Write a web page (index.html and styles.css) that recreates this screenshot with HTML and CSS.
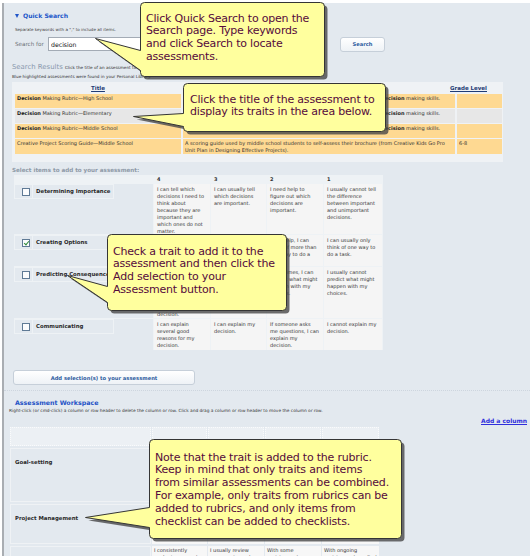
FILE: index.html
```html
<!DOCTYPE html>
<html lang="en">
<head>
<meta charset="utf-8">
<title>Quick Search</title>
<link rel="stylesheet" href="styles.css">
</head>
<body>
<div class="page">
  <section class="quick">
    <h2 class="panel-title"><span class="caret"></span>Quick Search</h2>
    <p class="hint">Separate keywords with a "," to include all items.</p>
    <form class="search-row">
      <label class="search-label" for="q">Search for</label>
      <input id="q" class="search-input" type="text" value="decision">
      <button type="button" class="btn search-btn">Search</button>
    </form>
  </section>

  <section class="results">
    <h3 class="results-title">Search Results <span class="note">Click the title of an assessment to view its traits below.</span></h3>
    <p class="note note-line">Blue highlighted assessments were found in your Personal Library.</p>
    <div class="results-panel">
      <div class="rgrid">
        <div class="rh rh-title"><a href="#">Title</a></div>
        <div class="rh rh-grade"><a href="#">Grade Level</a></div>

        <div class="rc orange"><b>Decision</b> Making Rubric—High School</div>
        <div class="rc orange">Students use this rubric in the classroom to evaluate and reflect on their own <b>Decision</b> making skills.</div>
        <div class="rc orange"></div>

        <div class="rc grey"><b>Decision</b> Making Rubric—Elementary</div>
        <div class="rc grey">Students use this rubric in the classroom to evaluate and reflect on their own <b>Decision</b> making skills.</div>
        <div class="rc grey"></div>

        <div class="rc orange"><b>Decision</b> Making Rubric—Middle School</div>
        <div class="rc orange">Students use this rubric in the classroom to evaluate and reflect on their own <b>Decision</b> making skills.</div>
        <div class="rc orange"></div>

        <div class="rc orange">Creative Project Scoring Guide—Middle School</div>
        <div class="rc orange">A scoring guide used by middle school students to self-assess their brochure (from Creative Kids Go Pro Unit Plan in Designing Effective Projects).</div>
        <div class="rc orange">6-8</div>
      </div>
    </div>

    <h3 class="select-title">Select items to add to your assessment:</h3>
    <div class="traits">
      <div class="th"></div>
      <div class="th">4</div>
      <div class="th">3</div>
      <div class="th">2</div>
      <div class="th">1</div>

      <div class="trait"><span class="cb-cell"><input type="checkbox" class="cb"></span><span class="name-cell">Determining Importance</span></div>
      <div class="td">I can tell which decisions I need to think about because they are important and which ones do not matter.</div>
      <div class="td">I can usually tell which decisions are important.</div>
      <div class="td">I need help to figure out which decisions are important.</div>
      <div class="td">I usually cannot tell the difference between important and unimportant decisions.</div>

      <div class="trait"><span class="cb-cell"><input type="checkbox" class="cb" checked></span><span class="name-cell">Creating Options</span></div>
      <div class="td">I can think of many different ways to do a task.</div>
      <div class="td">I can think of more than one way to do a task.</div>
      <div class="td">With help, I can think of more than one way to do a task.</div>
      <div class="td">I can usually only think of one way to do a task.</div>

      <div class="trait"><span class="cb-cell"><input type="checkbox" class="cb"></span><span class="name-cell">Predicting Consequences</span></div>
      <div class="td">I can predict what might happen with each of my choices and I use what I know to make a good, careful decision.</div>
      <div class="td">I can usually predict what might happen with my choices.</div>
      <div class="td">Sometimes, I can predict what might happen with my choices.</div>
      <div class="td">I usually cannot predict what might happen with my choices.</div>

      <div class="trait"><span class="cb-cell"><input type="checkbox" class="cb"></span><span class="name-cell">Communicating</span></div>
      <div class="td">I can explain several good reasons for my decision.</div>
      <div class="td">I can explain my decision.</div>
      <div class="td">If someone asks me questions, I can explain my decision.</div>
      <div class="td">I cannot explain my decision.</div>
    </div>

    <button type="button" class="btn add-btn">Add selection(s) to your assessment</button>
  </section>

  <section class="workspace">
    <h2 class="ws-title">Assessment Workspace</h2>
    <p class="note ws-note">Right-click (or cmd-click) a column or row header to delete the column or row. Click and drag a column or row header to move the column or row.</p>
    <div class="ws-actions"><a href="#" class="add-col">Add a column</a></div>
    <div class="ws-grid">
      <div class="wh"></div><div class="wh"></div><div class="wh"></div><div class="wh"></div><div class="wh"></div>

      <div class="wrow-name">Goal-setting</div>
      <div class="wd">I set goals for myself and check my progress toward them.</div>
      <div class="wd">I usually set goals for myself.</div>
      <div class="wd">With help, I can set goals.</div>
      <div class="wd">I do not set goals.</div>

      <div class="wrow-name">Project Management</div>
      <div class="wd">I plan my project and manage my time well.</div>
      <div class="wd">I usually plan my project.</div>
      <div class="wd">With help, I can plan my project.</div>
      <div class="wd">I do not plan my project.</div>

      <div class="wrow-name wrow-last">Problem Solving</div>
      <div class="wd">I consistently evaluate my work to find problems.</div>
      <div class="wd">I usually review progress toward my goals.</div>
      <div class="wd">With some assistance, I can find problems.</div>
      <div class="wd">With ongoing assistance, I can find problems.</div>
    </div>
  </section>
</div>

<svg class="callouts" width="530" height="556" viewBox="0 0 530 556" aria-hidden="true">
  <defs>
    <filter id="soft" x="-10%" y="-10%" width="120%" height="120%"><feGaussianBlur stdDeviation="0.7"/></filter>
    <path id="c1" d="M144.5 2.5 H320.5 Q324.5 2.5 324.5 6.5 V72.5 Q324.5 76.5 320.5 76.5 H144.5 Q140.5 76.5 140.5 72.5 V70.5 L95.5 38.5 L140.5 50.5 V6.5 Q140.5 2.5 144.5 2.5 Z"/>
    <path id="c2" d="M187.5 83.5 H381.5 Q385.5 83.5 385.5 87.5 V127.5 Q385.5 131.5 381.5 131.5 H187.5 Q183.5 131.5 183.5 127.5 V126.5 L133.5 116.5 L183.5 113.5 V87.5 Q183.5 83.5 187.5 83.5 Z"/>
    <path id="c3" d="M111.5 234.5 H282.5 Q286.5 234.5 286.5 238.5 V306.5 Q286.5 310.5 282.5 310.5 H111.5 Q107.5 310.5 107.5 306.5 V302.5 L67.5 275.5 L107.5 286.5 V238.5 Q107.5 234.5 111.5 234.5 Z"/>
    <path id="c4" d="M153.5 439.5 H397.5 Q401.5 439.5 401.5 443.5 V534.5 Q401.5 538.5 397.5 538.5 H153.5 Q149.5 538.5 149.5 534.5 V527.5 L85.5 517.5 L149.5 507.5 V443.5 Q149.5 439.5 153.5 439.5 Z"/>
  </defs>
  <g class="callout-shadow" transform="translate(3 3)" filter="url(#soft)">
    <use href="#c1"/><use href="#c2"/><use href="#c3"/><use href="#c4"/>
  </g>
  <g class="callout-shape">
    <use href="#c1"/><use href="#c2"/><use href="#c3"/><use href="#c4"/>
  </g>
</svg>

<div class="callout-text ct1">Click Quick Search to open the<br>Search page. Type keywords<br>and click Search to locate<br>assessments.</div>
<div class="callout-text ct2">Click the title of the assessment to<br>display its traits in the area below.</div>
<div class="callout-text ct3">Check a trait to add it to the<br>assessment and then click the<br>Add selection to your<br>Assessment button.</div>
<div class="callout-text ct4">Note that the trait is added to the rubric.<br>Keep in mind that only traits and items<br>from similar assessments can be combined.<br>For example, only traits from rubrics can be<br>added to rubrics, and only items from<br>checklist can be added to checklists.</div>
</body>
</html>
```

FILE: styles.css
```css
* { box-sizing: border-box; }
html, body { margin: 0; padding: 0; }
body {
  position: relative;
  width: 530px;
  height: 556px;
  overflow: hidden;
  background: #ffffff;
  font-family: "DejaVu Sans", Verdana, sans-serif;
  color: #333;
}
.page {
  margin: 3px 0 0 2px;
  border-left: 2px solid #a9adb2;
  background: #e3e9ef;
  height: 553px;
}

/* Quick search */
.quick { padding: 9px 0 0 11px; }
.panel-title {
  margin: 0;
  display: flex;
  align-items: center;
  gap: 3px;
  font-size: 6.1px;
  line-height: 8px;
  font-weight: bold;
  color: #2156c9;
}
.caret {
  width: 0; height: 0;
  border-left: 2.5px solid transparent;
  border-right: 2.5px solid transparent;
  border-top: 4px solid #2156c9;
  margin-right: 1px;
}
.hint {
  margin: 7px 0 0;
  font-size: 4.1px;
  line-height: 6px;
  color: #444;
}
.search-row {
  margin: 4px 0 0;
  display: flex;
  align-items: center;
  height: 14px;
}
.search-label {
  width: 33px;
  font-size: 5.6px;
  color: #6a6f76;
}
.search-input {
  width: 200px;
  height: 14px;
  margin: 0;
  padding: 0 2px;
  border: 1px solid #a3abb5;
  background: #fff;
  font-family: "DejaVu Sans", sans-serif;
  font-size: 6.2px;
  color: #111;
}
.btn {
  margin: 0;
  padding: 0;
  border: 1px solid #c6cfd9;
  border-radius: 3px;
  background: linear-gradient(#ffffff, #eef2f6);
  font-family: "DejaVu Sans", sans-serif;
  font-weight: bold;
  color: #2d5c9f;
}
.search-btn {
  margin-left: 92px;
  width: 45px;
  height: 15px;
  font-size: 5.2px;
}

/* Results */
.results { padding-left: 8px; }
.results-title {
  margin: 11px 0 0;
  font-size: 6.9px;
  line-height: 10px;
  font-weight: normal;
  color: #8898ad;
}
.note {
  font-size: 4.2px;
  color: #333;
}
.note-line {
  margin: 1px 0 0;
  line-height: 6px;
}
.results-panel {
  margin-top: 2px;
  width: 491px;
  padding: 1px 1px 8px 3px;
  background: #eff2f5;
}
.rgrid {
  display: grid;
  grid-template-columns: 166px 272px 45px;
  grid-template-rows: 10px;
  grid-auto-rows: minmax(14px, auto);
  column-gap: 2px;
  row-gap: 1px;
  font-size: 5px;
  line-height: 7px;
}
.rh {
  font-size: 5.5px;
  line-height: 10px;
  font-weight: bold;
}
.rh a { color: #1f3c76; text-decoration: underline; }
.rh-title { text-align: center; }
.rh-grade { grid-column: 2 / 4; text-align: right; padding-right: 15px; }
.rc { padding: 1px 2px 0; }
.orange { background: #fed992; }
.grey { background: #e7e7e7; }
.rc b { color: #222; }

.select-title {
  margin: 4px 0 0;
  font-size: 5.6px;
  line-height: 8px;
  font-weight: bold;
  color: #8e99a7;
}
.traits {
  margin: 1px 0 0 2px;
  width: 369px;
  display: grid;
  grid-template-columns: 139px 56px 55px 56px 58px;
  grid-template-rows: 8px 50px 31px 51px 31px;
  gap: 1px;
  background: #eef2f5;
}
.th {
  font-size: 5px;
  line-height: 8px;
  font-weight: bold;
  padding-left: 3px;
  color: #333;
}
.trait {
  display: flex;
  align-items: flex-start;
  background: #e3e9ef;
}
.cb-cell {
  width: 19px;
  height: 15px;
  padding: 3px 0 0 7px;
  border: 1px solid #eef2f5;
}
.cb {
  appearance: none;
  -webkit-appearance: none;
  display: block;
  position: relative;
  margin: 0;
  width: 8px;
  height: 8px;
  border: 1px solid #5f7a95;
  background: #fbfcfd;
}
.cb:checked::after {
  content: "";
  position: absolute;
  left: 1.5px;
  top: 0px;
  width: 2px;
  height: 4px;
  border-right: 1px solid #2f8a3a;
  border-bottom: 1px solid #2f8a3a;
  transform: rotate(40deg);
}
.name-cell {
  width: 81px;
  height: 15px;
  padding: 3px 0 0 3px;
  border: 1px solid #eef2f5;
  border-left: 0;
  font-size: 5.4px;
  line-height: 7px;
  font-weight: bold;
  white-space: nowrap;
  color: #2a2a2a;
}
.td {
  background: #f5f5f5;
  padding: 2px 3px 0 3px;
  font-size: 5px;
  line-height: 7px;
  color: #333;
  overflow: hidden;
}
.add-btn {
  display: block;
  margin: 20px 0 0 1px;
  width: 182px;
  height: 15px;
  font-size: 5.2px;
}

/* Workspace */
.workspace {
  margin-top: 5px;
  border-top: 1px dotted #cdd5de;
  padding: 0 3px 0 5px;
}
.ws-title {
  margin: 6.5px 0 0 6px;
  font-size: 6.3px;
  line-height: 9px;
  font-weight: bold;
  color: #2452c6;
}
.ws-note {
  margin: 1.5px 0 0;
  font-size: 4.3px;
  line-height: 6px;
}
.ws-actions {
  margin-top: 3px;
  text-align: right;
  font-size: 6px;
  line-height: 7px;
  font-weight: bold;
}
.add-col { color: #2f2fdc; text-decoration: underline; }
.ws-grid {
  margin: 3px 0 0 1px;
  width: 369px;
  display: grid;
  grid-template-columns: 141px 55px 56px 56px 57px;
  grid-template-rows: 19px 54px 40px 20px;
  column-gap: 1px;
  row-gap: 2px;
}
.wh {
  background: #ecf0f4;
  border: 1px dotted #fafbfc;
}
.wrow-name {
  background: #e3e9ef;
  border: 1px solid #eff2f5;
  padding: 10px 4px 0;
  font-size: 5.4px;
  line-height: 7px;
  font-weight: bold;
  color: #2a2a2a;
}
.wrow-last { padding-top: 9px; }
.wd {
  background: #f7f7f7;
  padding: 1px 2px 0;
  font-size: 5px;
  line-height: 7px;
  color: #333;
}

/* Callouts */
.callouts {
  position: absolute;
  top: 0;
  left: 0;
  pointer-events: none;
}
.callout-shadow { fill: #4a4a4a; opacity: 0.8; }
.callout-shape { fill: #ffff9e; stroke: #353535; stroke-width: 1; }
.callout-text {
  position: absolute;
  white-space: nowrap;
  font-family: "DejaVu Sans", Verdana, sans-serif;
  font-size: 11px;
  letter-spacing: -0.2px;
  line-height: 12.9px;
  color: #550a3c;
}
.ct1 { left: 146px; top: 12.5px; }
.ct2 { left: 190px; top: 93.5px; }
.ct3 { left: 113px; top: 245.5px; }
.ct4 { left: 155px; top: 451.5px; }
```
